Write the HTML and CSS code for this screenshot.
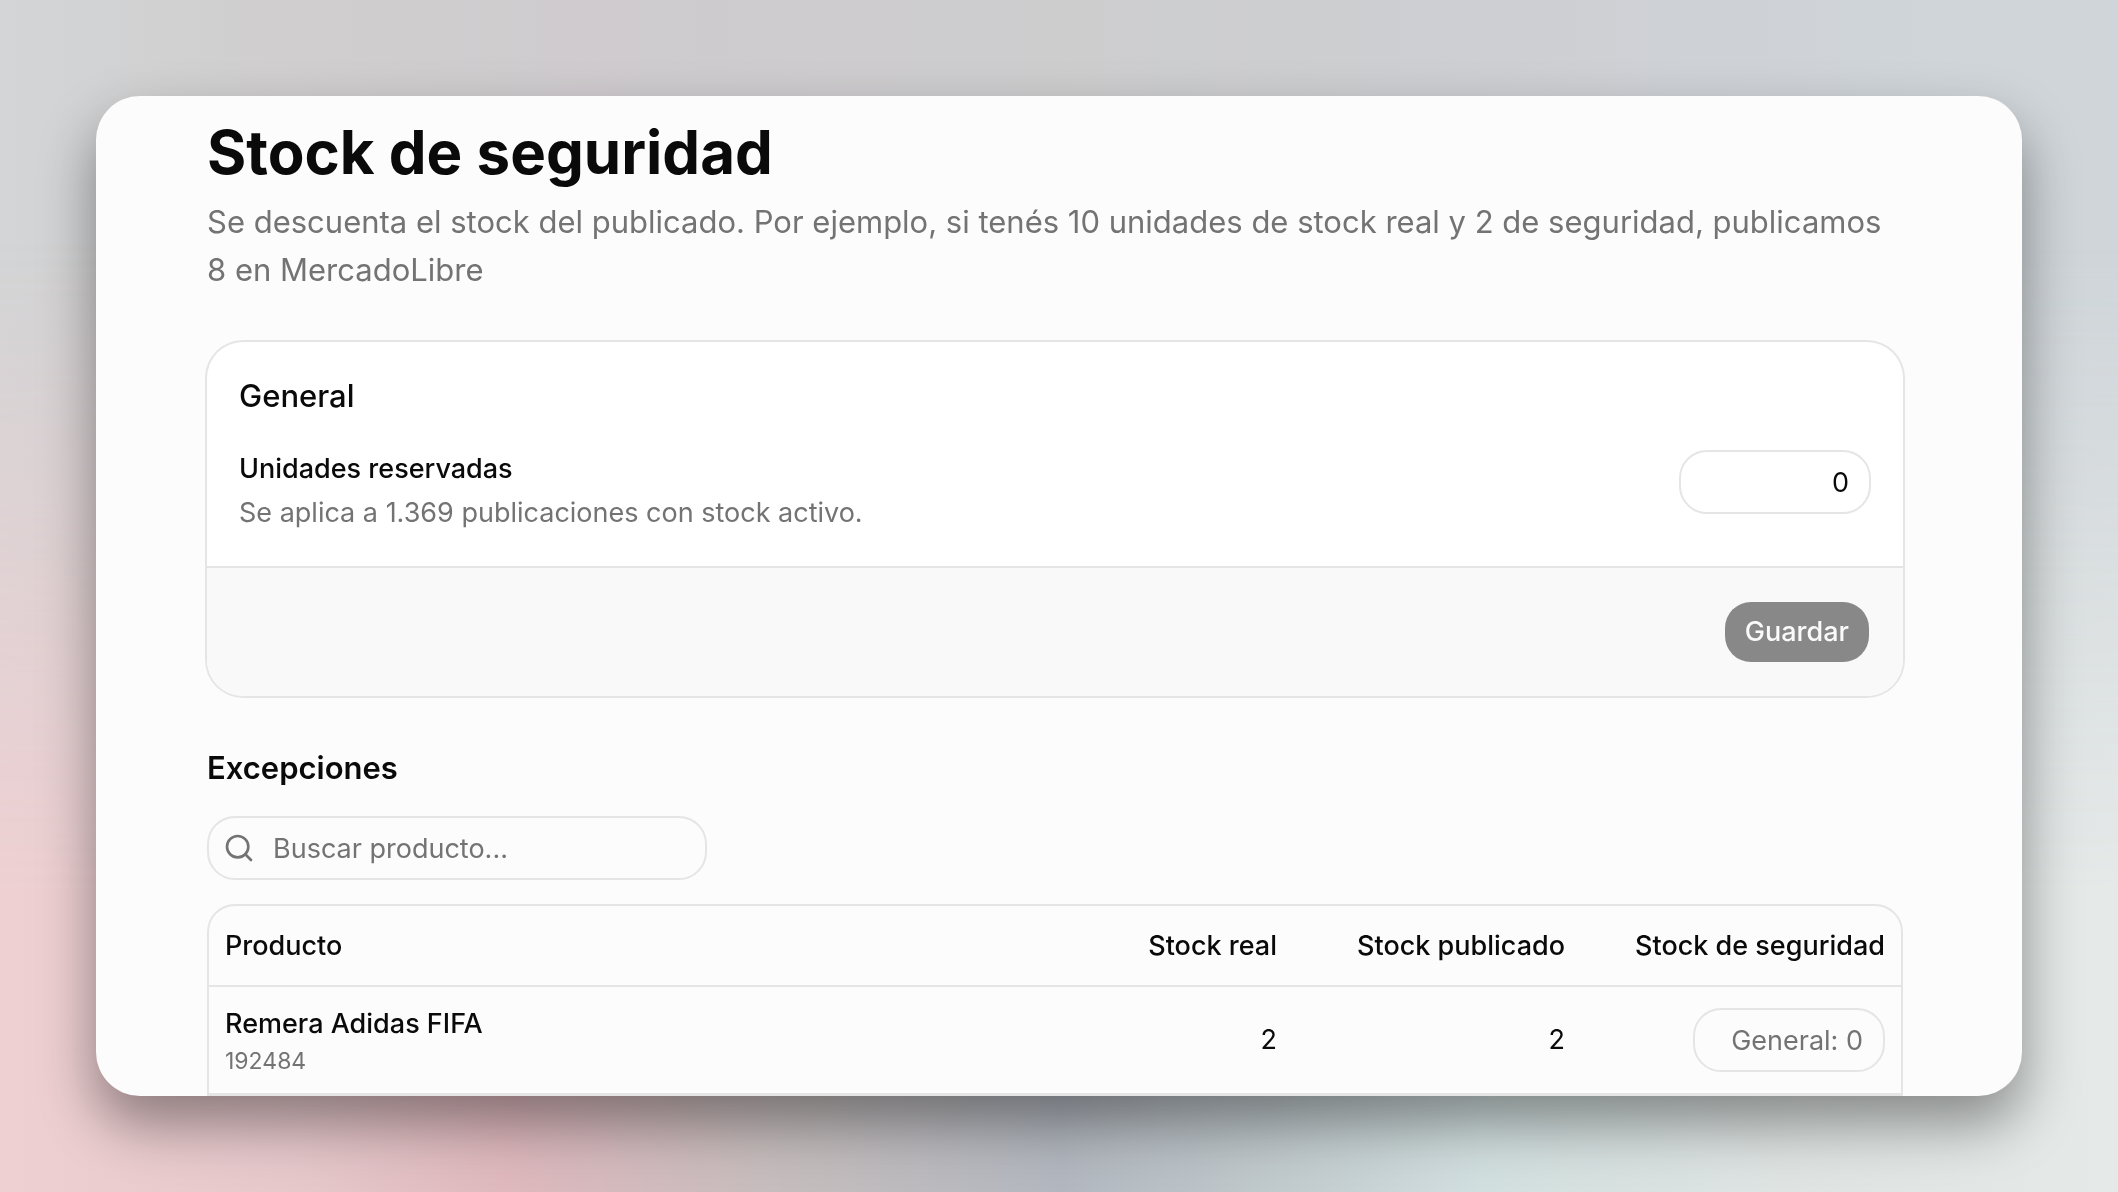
FILE: index.html
```html
<!DOCTYPE html>
<html lang="es">
<head>
  <meta charset="UTF-8" />
  <meta name="viewport" content="width=device-width, initial-scale=1.0"/>
  <title>Stock de seguridad</title>
  <link rel="stylesheet" href="styles.css">
</head>
<body>
  <main class="window">
    <header class="page-header">
      <h1>Stock de seguridad</h1>
      <p>Se descuenta el stock del publicado. Por ejemplo, si tenés 10 unidades de stock real y 2 de seguridad, publicamos 8 en MercadoLibre</p>
    </header>

    <form class="card">
      <div class="card-body">
        <h2>General</h2>
        <div class="field">
          <div class="field-text">
            <label for="reserved">Unidades reservadas</label>
            <p>Se aplica a 1.369 publicaciones con stock activo.</p>
          </div>
          <input class="input number" id="reserved" type="text" inputmode="numeric" value="0">
        </div>
      </div>
      <div class="card-footer">
        <button type="submit" disabled>Guardar</button>
      </div>
    </form>

    <section class="exceptions">
      <h2>Excepciones</h2>

      <div class="search">
        <svg viewBox="0 0 24 24" aria-hidden="true">
          <circle cx="11" cy="11" r="8"/>
          <path d="m21 21-4.3-4.3"/>
        </svg>
        <input class="input" type="search" placeholder="Buscar producto..." aria-label="Buscar producto">
      </div>

      <div class="table-wrap">
        <table>
          <thead>
            <tr>
              <th>Producto</th>
              <th class="col-stock">Stock real</th>
              <th class="col-stock">Stock publicado</th>
              <th class="col-safety">Stock de seguridad</th>
            </tr>
          </thead>
          <tbody>
            <tr>
              <td>
                <div class="product">Remera Adidas FIFA</div>
                <div class="sku">192484</div>
              </td>
              <td class="col-stock">2</td>
              <td class="col-stock">2</td>
              <td class="col-safety">
                <input class="input number" type="text" inputmode="numeric" placeholder="General: 0" aria-label="Stock de seguridad de Remera Adidas FIFA">
              </td>
            </tr>
          </tbody>
        </table>
      </div>
    </section>
  </main>
</body>
</html>
```
FILE: styles.css
```css
* {
  box-sizing: border-box;
}
body {
  margin: 0;
  height: 100vh;
  padding: 96px;
  overflow: hidden;
  font-family: Inter, sans-serif;
  font-size: 27px;
  line-height: 42px;
  color: #0a0a0a;
  background: linear-gradient(to right, #d3d5d6 0%, #d0cecf 14%, #cfcbce 28%, #cdcdce 50%, #cecfd3 72%, #cfd5d9 92%);
}
/* bottom half of the wallpaper, faded into the top one */
body::before {
  content: "";
  position: fixed;
  inset: 0;
  z-index: -1;
  background: linear-gradient(to right, #eed0d2 0%, #e6c8cb 14%, #deb8bd 24%, #c5bdbd 37%, #b2b7bf 50%, #c0c9cc 60%, #d2dfdf 70%, #dfe4e2 85%, #e5e9e8 100%);
  -webkit-mask-image: linear-gradient(to bottom, transparent 20%, #000 75%);
  mask-image: linear-gradient(to bottom, transparent 20%, #000 75%);
}
h1, h2, p {
  margin: 0;
}
input, button {
  font: inherit;
  color: inherit;
}
.window {
  height: 100%;
  padding: 20px 119px 0 111px;
  overflow: hidden;
  background-color: #fcfcfc;
  border-radius: 44px;
  box-shadow: 0 28px 56px rgba(0, 0, 0, 0.4);
}
.page-header h1 {
  font-size: 60px;
  line-height: 72px;
  font-weight: 700;
}
.page-header p {
  margin-top: 10px;
  font-size: 31px;
  line-height: 48px;
  color: #737373;
}
.card {
  margin-top: 48px;
  background-color: #fff;
  border-radius: 36px;
  box-shadow: 0 0 0 2px #e5e5e5;
  overflow: hidden;
}
.card-body {
  padding: 32px;
}
.card-body h2 {
  margin-bottom: 32px;
  font-size: 31px;
  line-height: 44px;
  font-weight: 500;
}
.field {
  display: flex;
  justify-content: space-between;
  align-items: flex-start;
}
.field-text label {
  display: block;
  margin-bottom: 4px;
  line-height: 38px;
  font-weight: 500;
}
.field-text p {
  color: #737373;
}
.input {
  height: 64px;
  padding: 0 20px;
  border: 2px solid #e5e5e5;
  border-radius: 28px;
  background-color: transparent;
  outline: none;
}
.input::placeholder {
  color: #737373;
}
.number {
  width: 192px;
  text-align: right;
}
.card-footer {
  display: flex;
  justify-content: flex-end;
  padding: 32px;
  border-top: 2px solid #e5e5e5;
  background-color: #f9f9f9;
}
.card-footer button {
  height: 64px;
  padding: 0 20px;
  border: 2px solid transparent;
  border-radius: 28px;
  background-color: #888;
  background-clip: padding-box;
  color: #fafafa;
  font-weight: 500;
}
.exceptions {
  margin-top: 48px;
}
.exceptions h2 {
  font-size: 31px;
  line-height: 48px;
  font-weight: 600;
}
.search {
  position: relative;
  width: 500px;
  margin: 24px 0;
}
.search svg {
  position: absolute;
  top: 16px;
  left: 16px;
  width: 32px;
  height: 32px;
  fill: none;
  stroke: #737373;
  stroke-width: 2;
  stroke-linecap: round;
  stroke-linejoin: round;
}
.search .input {
  display: block;
  width: 100%;
  padding-left: 64px;
}
.table-wrap {
  border: 2px solid #e5e5e5;
  border-radius: 28px 28px 0 0;
}
table {
  width: 100%;
  border-spacing: 0;
}
th, td {
  padding: 16px;
  text-align: left;
  border-bottom: 2px solid #e5e5e5;
}
th {
  height: 81px;
  font-weight: 500;
}
.col-stock {
  width: 288px;
  text-align: right;
}
.col-safety {
  width: 320px;
  text-align: right;
}
.col-safety .input {
  display: block;
  margin-left: auto;
}
.product {
  font-weight: 500;
}
.sku {
  font-size: 23px;
  line-height: 32px;
  color: #737373;
}
```
